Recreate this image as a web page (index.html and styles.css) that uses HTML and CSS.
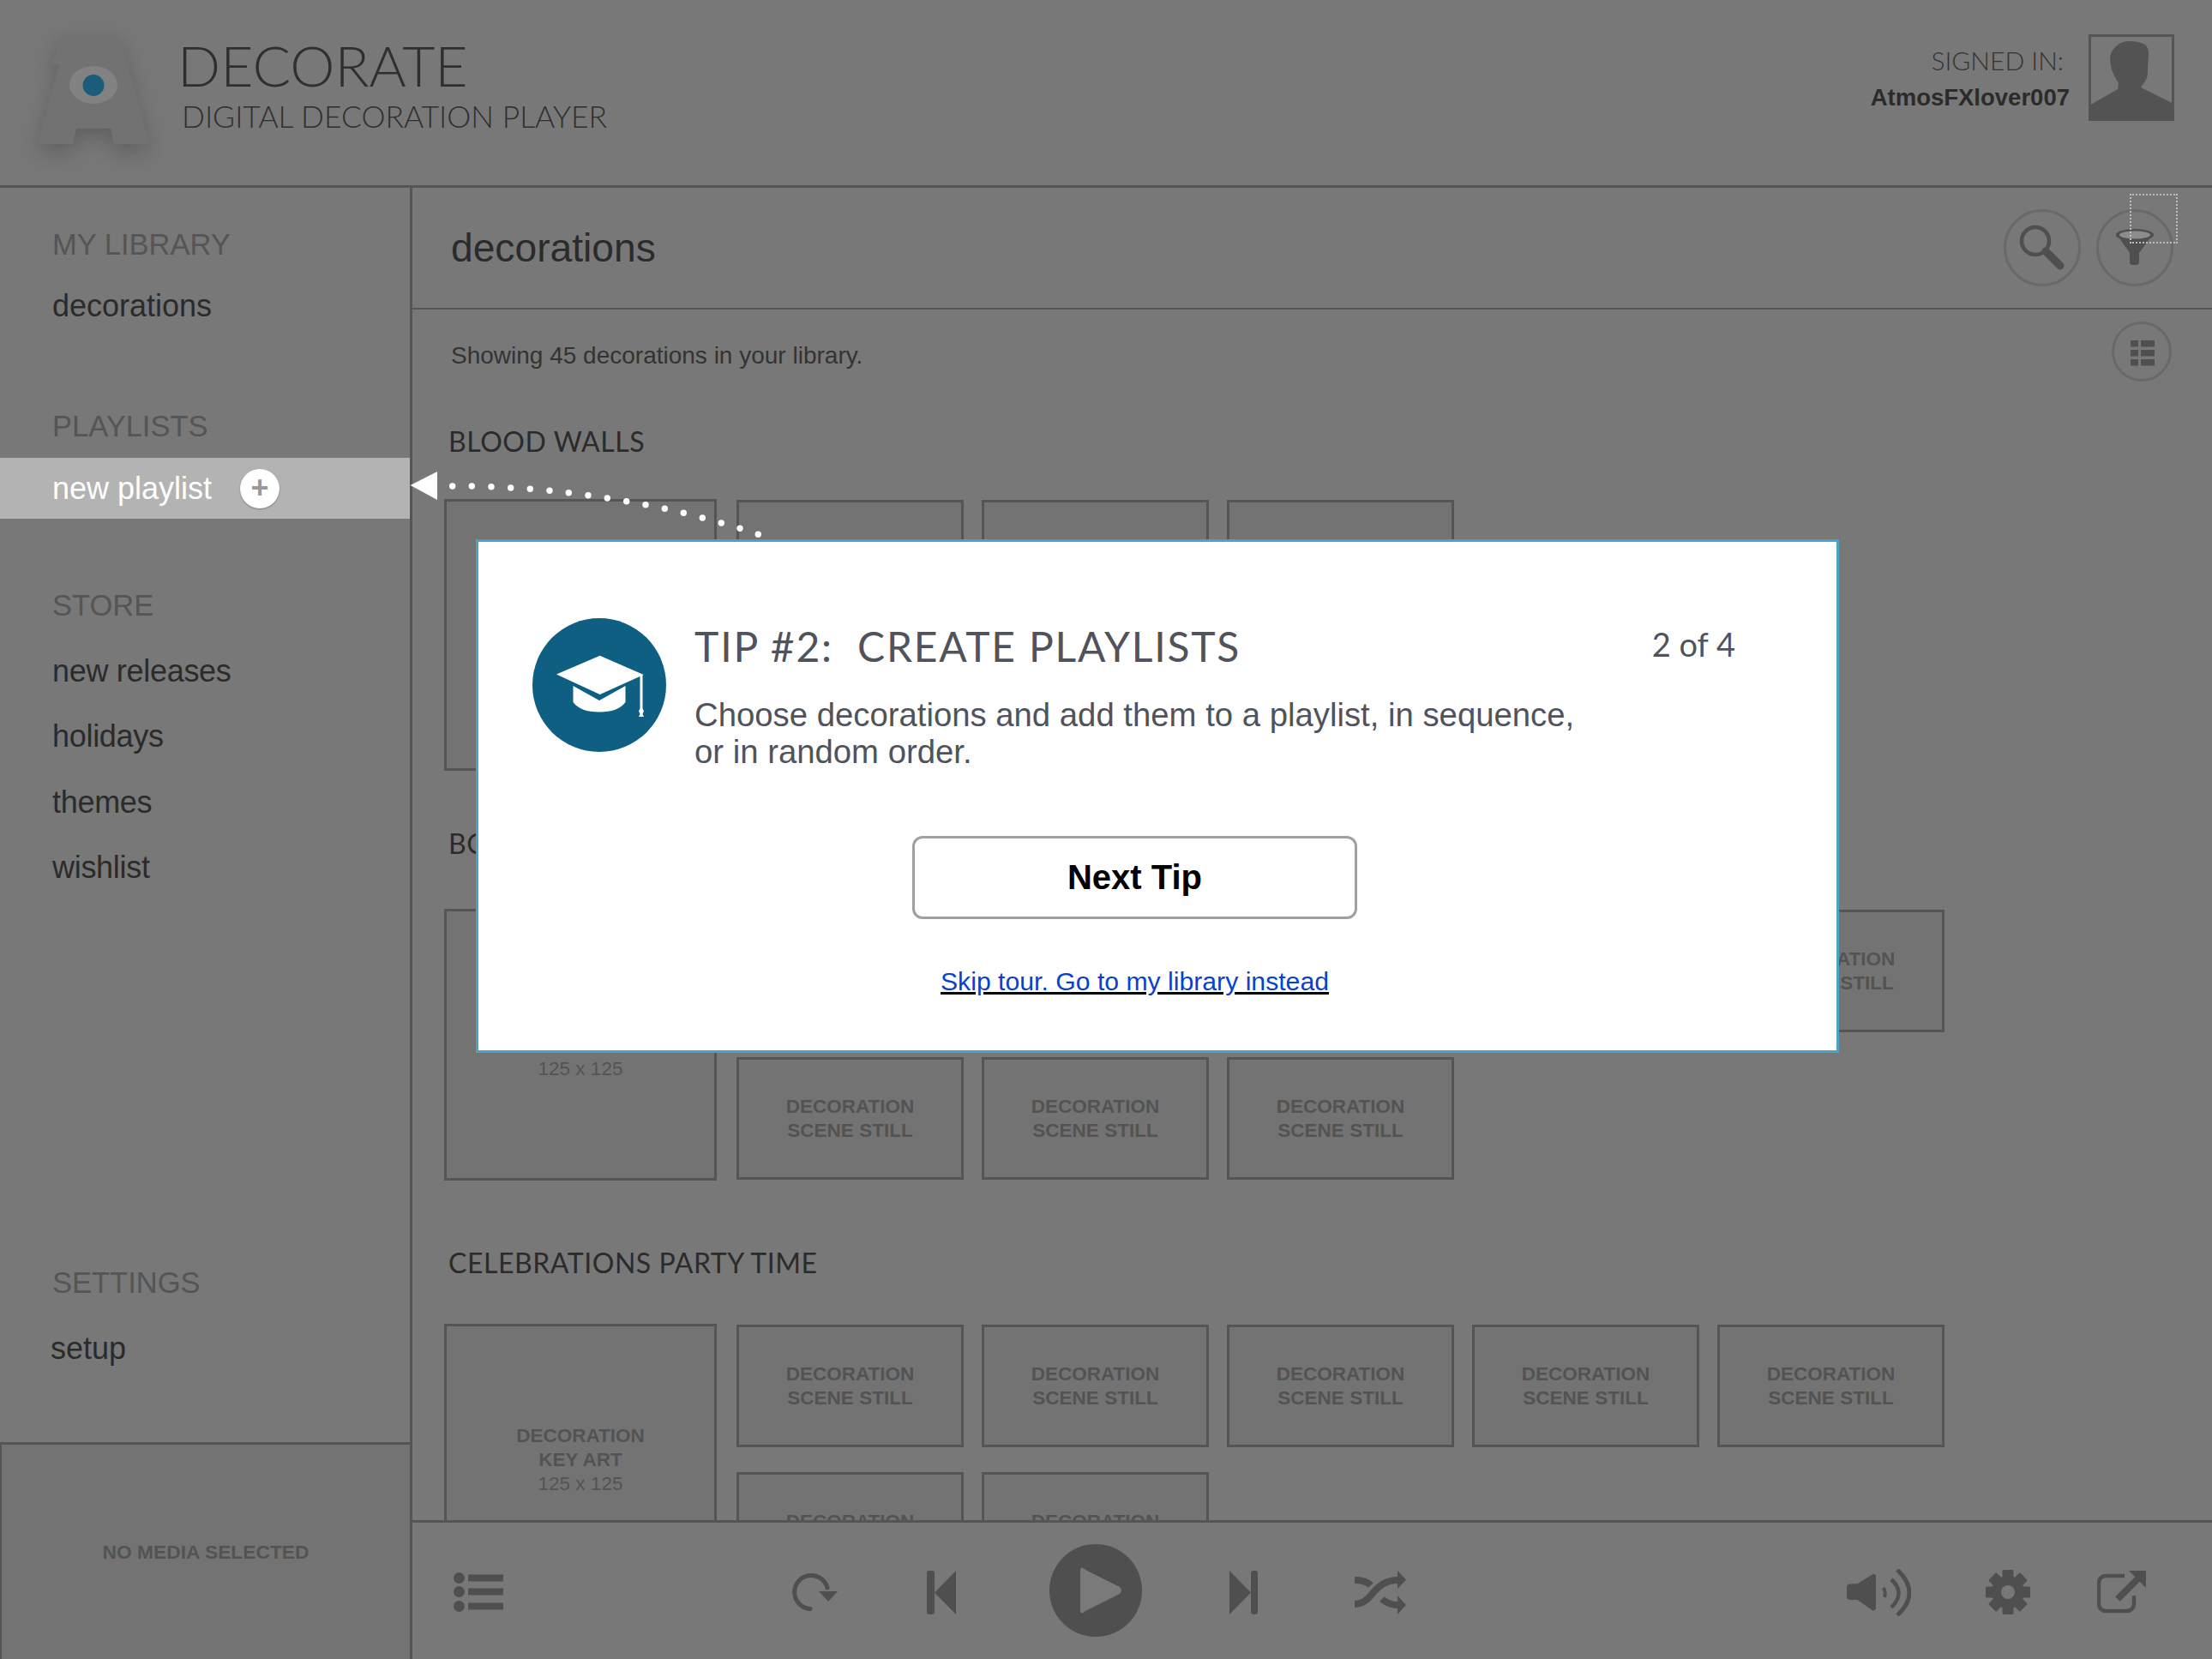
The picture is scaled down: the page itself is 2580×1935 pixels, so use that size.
FILE: index.html
```html
<!DOCTYPE html>
<html lang="en">
<head>
<meta charset="utf-8">
<title>Decorate</title>
<link rel="stylesheet" href="styles.css">
</head>
<body>
<div class="app">
  <header class="topbar">
    <div class="brand">
      <svg class="logo" viewBox="20 20 190 180" width="190" height="180">
        <polygon class="logo-a" points="69,41 139,41 175,168 133,168 129,150 89,150 85,168 44,168 69,75 60,75 66,61"/>
        <ellipse class="logo-eye" cx="109" cy="99" rx="28" ry="22"/>
        <circle class="logo-pupil" cx="109" cy="99.500" r="12.500"/>
      </svg>
      <div class="brand-text">
        <div class="brand-name">DECORATE</div>
        <div class="brand-sub">DIGITAL DECORATION PLAYER</div>
      </div>
    </div>
    <div class="account">
      <div class="account-text">
        <div class="signed">SIGNED IN:</div>
        <div class="username">AtmosFXlover007</div>
      </div>
      <svg class="avatar" viewBox="0 0 100 101" width="100" height="101">
        <rect class="avatar-frame" x="1.500" y="1.500" width="97" height="98"/>
        <path class="avatar-person" d="M1 83 L34 64 L35 57 Q27 44 26 37 L25 27 Q26 20 31 15 Q38 8 47 8 Q58 8 66 12 Q70 16 70 22 L69 42 Q69 50 67 53 L61 62 L97 80 L100 101 L0 101 Z"/>
      </svg>
    </div>
  </header>

  <div class="workspace">
    <aside class="sidebar">
      <nav class="nav-top">
        <section class="nav-group">
          <h2 class="nav-head">MY LIBRARY</h2>
          <a class="nav-item">decorations</a>
        </section>
        <section class="nav-group nav-group-playlists">
          <h2 class="nav-head">PLAYLISTS</h2>
          <a class="nav-active">new playlist<span class="plus">+</span></a>
        </section>
        <section class="nav-group nav-group-store">
          <h2 class="nav-head">STORE</h2>
          <a class="nav-item nav-item-store">new releases</a>
          <a class="nav-item nav-item-store">holidays</a>
          <a class="nav-item nav-item-store">themes</a>
          <a class="nav-item nav-item-store">wishlist</a>
        </section>
      </nav>
      <section class="nav-settings">
        <h2 class="nav-head">SETTINGS</h2>
        <a class="nav-item nav-item-setup">setup</a>
      </section>
      <div class="now-playing">NO MEDIA SELECTED</div>
    </aside>

    <main class="main">
      <div class="titlebar">
        <h1 class="page-title">decorations</h1>
        <div class="tools">
          <button class="round-btn">
            <svg viewBox="0 0 84 84" width="84" height="84">
              <circle class="ic-stroke" cx="34" cy="34" r="16" stroke-width="4.500"/>
              <line class="ic-stroke" x1="46" y1="46" x2="63" y2="63" stroke-width="9"/>
            </svg>
          </button>
          <button class="round-btn">
            <svg viewBox="0 0 84 84" width="84" height="84">
              <polygon class="ic-fill" points="20,25 64,25 47,48 47,60 45,62 38,62 36,60 36,48"/>
              <ellipse class="ic-fill" cx="42" cy="27" rx="22" ry="7"/>
              <ellipse class="filter-mouth" cx="42" cy="27" rx="18" ry="4.500"/>
            </svg>
          </button>
        </div>
        <div class="hotspot"></div>
      </div>

      <div class="content">
        <div class="summary">
          <p class="summary-text">Showing 45 decorations in your library.</p>
          <button class="round-btn round-btn-small">
            <svg viewBox="0 0 64 64" width="64" height="64">
              <rect class="ic-fill" x="19" y="19" width="9" height="7.500"/><rect class="ic-fill" x="31" y="19" width="16" height="7.500"/>
              <rect class="ic-fill" x="19" y="30" width="9" height="7.500"/><rect class="ic-fill" x="31" y="30" width="16" height="7.500"/>
              <rect class="ic-fill" x="19" y="41" width="9" height="7.500"/><rect class="ic-fill" x="31" y="41" width="16" height="7.500"/>
            </svg>
          </button>
        </div>

        <section class="shelf shelf-blood">
          <h3 class="shelf-title">BLOOD WALLS</h3>
          <div class="tiles">
            <div class="tile-key">DECORATION<br>KEY ART<br><span class="tile-size">125 x 125</span></div>
            <div class="stills">
              <div class="still">DECORATION<br>SCENE STILL</div>
              <div class="still">DECORATION<br>SCENE STILL</div>
              <div class="still">DECORATION<br>SCENE STILL</div>
            </div>
          </div>
        </section>

        <section class="shelf shelf-bones">
          <h3 class="shelf-title">BONE CHILLERS</h3>
          <div class="tiles">
            <div class="tile-key">DECORATION<br>KEY ART<br><span class="tile-size">125 x 125</span></div>
            <div class="stills">
              <div class="still">DECORATION<br>SCENE STILL</div>
              <div class="still">DECORATION<br>SCENE STILL</div>
              <div class="still">DECORATION<br>SCENE STILL</div>
              <div class="still">DECORATION<br>SCENE STILL</div>
              <div class="still">DECORATION<br>SCENE STILL</div>
              <div class="still">DECORATION<br>SCENE STILL</div>
              <div class="still">DECORATION<br>SCENE STILL</div>
              <div class="still">DECORATION<br>SCENE STILL</div>
            </div>
          </div>
        </section>

        <section class="shelf shelf-party">
          <h3 class="shelf-title">CELEBRATIONS PARTY TIME</h3>
          <div class="tiles">
            <div class="tile-key">DECORATION<br>KEY ART<br><span class="tile-size">125 x 125</span></div>
            <div class="stills">
              <div class="still">DECORATION<br>SCENE STILL</div>
              <div class="still">DECORATION<br>SCENE STILL</div>
              <div class="still">DECORATION<br>SCENE STILL</div>
              <div class="still">DECORATION<br>SCENE STILL</div>
              <div class="still">DECORATION<br>SCENE STILL</div>
              <div class="still">DECORATION<br>SCENE STILL</div>
              <div class="still">DECORATION<br>SCENE STILL</div>
            </div>
          </div>
        </section>
      </div>

      <footer class="player">
        <svg class="ic-list" viewBox="0 0 58 46" width="58" height="46">
          <circle class="ic-fill" cx="6.500" cy="6.500" r="6.500"/><rect class="ic-fill" x="17" y="2.500" width="41" height="8"/>
          <circle class="ic-fill" cx="6.500" cy="22.500" r="6.500"/><rect class="ic-fill" x="17" y="18.500" width="41" height="8"/>
          <circle class="ic-fill" cx="6.500" cy="39.500" r="6.500"/><rect class="ic-fill" x="17" y="35.500" width="41" height="8"/>
        </svg>
        <div class="transport">
          <svg class="ic-repeat" viewBox="0 0 53 44" width="53" height="44">
            <path class="ic-stroke" stroke-width="5" d="M21 41.500 A19.500 19.500 0 1 1 41 17"/>
            <polygon class="ic-fill" points="42,33 31,21 53,21"/>
          </svg>
          <svg class="ic-prev" viewBox="0 0 34 51" width="34" height="51">
            <rect class="ic-fill" x="0" y="0" width="9" height="51" rx="3"/>
            <polygon class="ic-fill" points="34,0 34,51 9,25.500"/>
          </svg>
          <svg class="ic-play" viewBox="0 0 108 108" width="108" height="108">
            <circle class="ic-fill" cx="54" cy="54" r="54"/>
            <path class="play-mark" d="M36 32 Q36 24 42 30 L82 50 Q86 54 82 58 L42 78 Q36 84 36 76 Z"/>
          </svg>
          <svg class="ic-next" viewBox="0 0 33 51" width="33" height="51">
            <polygon class="ic-fill" points="0,0 0,51 25,25.500"/>
            <rect class="ic-fill" x="25" y="0" width="8" height="51" rx="3"/>
          </svg>
          <svg class="ic-shuffle" viewBox="0 0 60 51" width="60" height="51">
            <path class="ic-stroke ic-butt" stroke-width="8" d="M0 39 C22 39 20 11 51 11"/>
            <path class="ic-stroke ic-butt" stroke-width="8" d="M0 11 C8 11 14 12 19 17"/>
            <path class="ic-stroke ic-butt" stroke-width="8" d="M32 33 C37 38 43 40 51 40"/>
            <polygon class="ic-fill" points="50,0 60,10.500 50,21"/>
            <polygon class="ic-fill" points="50,29 60,40 50,51"/>
          </svg>
        </div>
        <div class="extras">
          <svg class="ic-volume" viewBox="0 0 75 55" width="75" height="55">
            <path class="ic-fill" d="M4 17.500 L12.300 17.300 L31 5.700 L34 7.300 L34 46.700 L31 49 L12.300 36 L4 36 Q0 36 0 32 L0 21.500 Q0 17.500 4 17.500 Z"/>
            <path class="ic-stroke ic-butt" stroke-width="4" d="M42.500 22 Q46 26 44 33"/>
            <path class="ic-stroke ic-butt" stroke-width="4.500" d="M52 12 Q69 28 52 45"/>
            <path class="ic-stroke ic-butt" stroke-width="5" d="M59 1 Q87 28 59 54"/>
          </svg>
          <svg class="ic-gear" viewBox="-26 -26 52 52" width="52" height="52">
            <circle class="ic-stroke" r="13.500" stroke-width="11"/>
            <rect class="ic-fill" x="-6.500" y="-26" width="13" height="10" rx="1.500"/>
            <rect class="ic-fill" x="-6.500" y="-26" width="13" height="10" rx="1.500" transform="rotate(45)"/>
            <rect class="ic-fill" x="-6.500" y="-26" width="13" height="10" rx="1.500" transform="rotate(90)"/>
            <rect class="ic-fill" x="-6.500" y="-26" width="13" height="10" rx="1.500" transform="rotate(135)"/>
            <rect class="ic-fill" x="-6.500" y="-26" width="13" height="10" rx="1.500" transform="rotate(180)"/>
            <rect class="ic-fill" x="-6.500" y="-26" width="13" height="10" rx="1.500" transform="rotate(225)"/>
            <rect class="ic-fill" x="-6.500" y="-26" width="13" height="10" rx="1.500" transform="rotate(270)"/>
            <rect class="ic-fill" x="-6.500" y="-26" width="13" height="10" rx="1.500" transform="rotate(315)"/>
          </svg>
          <svg class="ic-share" viewBox="0 0 57 50" width="57" height="50">
            <path class="ic-stroke ic-butt" stroke-width="4.500" d="M32 6 H10 a8 8 0 0 0 -8 8 V39 a8 8 0 0 0 8 8 H35 a8 8 0 0 0 8 -8 V29"/>
            <line class="ic-stroke ic-butt" x1="24" y1="33" x2="49" y2="8" stroke-width="8"/>
            <polygon class="ic-fill" points="37,0 57,0 57,20"/>
          </svg>
        </div>
      </footer>
    </main>
  </div>

  <svg class="pointer" viewBox="478 545 420 90" width="420" height="90">
    <polygon class="pointer-dot" points="510,550 510,583 478.600,566"/>
    <circle class="pointer-dot" cx="527.700" cy="567" r="3.700"/>
    <circle class="pointer-dot" cx="550.300" cy="567" r="3.700"/>
    <circle class="pointer-dot" cx="573" cy="567.700" r="3.700"/>
    <circle class="pointer-dot" cx="595.700" cy="569" r="3.700"/>
    <circle class="pointer-dot" cx="618.300" cy="570.300" r="3.700"/>
    <circle class="pointer-dot" cx="641" cy="572.300" r="3.700"/>
    <circle class="pointer-dot" cx="663.300" cy="574.700" r="3.700"/>
    <circle class="pointer-dot" cx="686" cy="577.700" r="3.700"/>
    <circle class="pointer-dot" cx="708.300" cy="581" r="3.700"/>
    <circle class="pointer-dot" cx="730.700" cy="584.700" r="3.700"/>
    <circle class="pointer-dot" cx="753" cy="588.700" r="3.700"/>
    <circle class="pointer-dot" cx="775.300" cy="593.300" r="3.700"/>
    <circle class="pointer-dot" cx="797.300" cy="598.300" r="3.700"/>
    <circle class="pointer-dot" cx="819.300" cy="604" r="3.700"/>
    <circle class="pointer-dot" cx="841.300" cy="610" r="3.700"/>
    <circle class="pointer-dot" cx="863" cy="616.300" r="3.700"/>
    <circle class="pointer-dot" cx="884.300" cy="623.300" r="3.700"/>
  </svg>

  <div class="modal">
    <div class="tip">
      <svg class="tip-icon" viewBox="0 0 156 156" width="156" height="156">
        <circle class="tip-disc" cx="78" cy="78" r="78"/>
        <path class="tip-cap" d="M47.500 79 L78 96 L108.500 79 L108.500 98 Q100 109.500 78 109.500 Q56 109.500 47.500 98 Z"/>
        <polygon class="tip-cap" points="28,65.500 78.700,43.700 129.700,66 78.700,89"/>
        <rect class="tip-cap" x="125.500" y="66" width="3" height="42"/>
        <polygon class="tip-cap" points="127,104 130,108 128.500,112 130,115 124,115 125.500,112 124,108"/>
      </svg>
      <div class="tip-body">
        <div class="tip-head">
          <h2 class="tip-title">TIP #2:  CREATE PLAYLISTS</h2>
          <span class="tip-count">2 of 4</span>
        </div>
        <p class="tip-text">Choose decorations and add them to a playlist, in sequence,<br>or in random order.</p>
      </div>
    </div>
    <div class="tip-actions">
      <button class="next-btn">Next Tip</button>
      <a class="skip-link" href="#">Skip tour. Go to my library instead</a>
    </div>
  </div>
</div>
</body>
</html>
```

FILE: styles.css
```css
* { box-sizing: border-box; }
html, body { margin: 0; padding: 0; }
body { background: #787878; font-family: "Liberation Sans", Arial, sans-serif; color: #2b2b2b; }
h1, h2, h3, p { margin: 0; font-weight: normal; }

.app { position: relative; width: 2580px; height: 1935px; overflow: hidden; display: flex; flex-direction: column; }

/* top bar */
.topbar { height: 219px; flex: none; border-bottom: 3px solid #555; display: flex; justify-content: space-between; align-items: flex-start; padding-right: 43px; }
.brand { display: flex; align-items: flex-start; margin-left: 20px; margin-top: 20px; }
.logo { display: block; overflow: visible; }
.logo-a { fill: #727272; filter: drop-shadow(0 9px 12px rgba(60,60,60,.4)); }
.logo-eye { fill: #828282; }
.logo-pupil { fill: #1b5c78; }
.brand-text { margin-left: -3px; margin-top: 21px; font-family: Lato, sans-serif; font-weight: 300; color: #2f2f2f; }
.brand-name { font-size: 66px; line-height: 70px; height: 70px; }
.brand-sub { font-size: 35.400px; line-height: 44px; margin-top: 3px; margin-left: 5px; }
.account { display: flex; align-items: flex-start; margin-top: 40px; }
.account-text { text-align: right; margin-top: 8px; margin-right: 22px; }
.signed { font-family: Lato, sans-serif; font-weight: 300; font-size: 30px; line-height: 44px; margin-right: 7px; color: #333; }
.username { font-weight: bold; font-size: 27.500px; line-height: 44px; color: #2b2b2b; }
.avatar { display: block; margin-right: 1px; }
.avatar-frame { fill: none; stroke: #555; stroke-width: 3; }
.avatar-person { fill: #535353; }

/* layout */
.workspace { flex: 1; display: flex; min-height: 0; }

/* sidebar */
.sidebar { width: 481px; flex: none; border-right: 3px solid #555; display: flex; flex-direction: column; }
.nav-top { padding-top: 46px; flex: 1; }
.nav-head { font-size: 34.500px; line-height: 40px; height: 40px; padding-left: 61px; color: #555; }
.nav-item { display: block; font-size: 36px; line-height: 40px; height: 40px; margin-top: 32px; padding-left: 61px; color: #2b2b2b; }
.nav-item-store { margin-top: 36.600px; letter-spacing: -.3px; }
.nav-group-playlists { margin-top: 100px; }
.nav-group-store { margin-top: 81px; }
.nav-active { display: flex; align-items: center; height: 71px; margin-top: 17px; padding-left: 61px; background: #b3b3b3; color: #fff; font-size: 36px; }
.plus { width: 46px; height: 46px; margin-left: 33px; border-radius: 50%; background: #fff; color: #999; font-size: 36px; font-weight: bold; line-height: 44px; text-align: center; box-shadow: 0 1px 2px rgba(0,0,0,.3); }
.nav-settings { padding-bottom: 89px; }
.nav-item-setup { margin-top: 37px; padding-left: 59px; }
.now-playing { height: 253px; flex: none; background: #737373; border-top: 3px solid #555; border-left: 2px solid #555; display: flex; align-items: center; justify-content: center; padding-top: 1px; font-size: 22.800px; font-weight: bold; color: #535353; }

/* main */
.main { flex: 1; min-width: 0; display: flex; flex-direction: column; }
.titlebar { position: relative; height: 142px; flex: none; border-bottom: 2px solid #555; display: flex; align-items: center; justify-content: space-between; padding: 0 45px; }
.page-title { font-size: 46.200px; line-height: 60px; color: #2b2b2b; }
.tools { display: flex; gap: 18px; }
.round-btn { width: 90px; height: 90px; padding: 0; border: 3px solid #696969; border-radius: 50%; background: none; display: flex; align-items: center; justify-content: center; }
.round-btn svg { display: block; }
.round-btn-small { width: 70px; height: 70px; }
.hotspot { position: absolute; left: 2003px; top: 7px; width: 56px; height: 58px; border: 2px dotted #bdbdbd; }
.ic-fill { fill: #4f4f4f; }
.ic-stroke { fill: none; stroke: #4f4f4f; stroke-linecap: round; }
.ic-butt { stroke-linecap: butt; }
.filter-mouth { fill: #8c8c8c; }
.play-mark { fill: #7a7a7a; }

.content { flex: 1; min-height: 0; overflow: hidden; padding: 14px 0 0 37px; }
.summary { display: flex; justify-content: space-between; align-items: flex-start; padding-right: 47px; height: 70px; }
.summary-text { font-size: 28px; line-height: 40px; margin: 20px 0 0 8px; color: #333; }
.shelf-title { font-family: Lato, sans-serif; font-size: 32px; line-height: 40px; letter-spacing: .55px; margin-left: 5px; color: #2b2b2b; }
.shelf-blood { margin-top: 50px; }
.shelf-blood .tiles { margin-top: 47px; }
.shelf-bones { margin-top: 65px; }
.shelf-bones .tiles { margin-top: 56px; }
.shelf-party { margin-top: 76px; }
.shelf-party .tiles { margin-top: 51px; }
.tiles { display: flex; align-items: flex-start; }
.tile-key { width: 318px; height: 317px; flex: none; margin-right: 23px; border: 3px solid #555; background: #737373; text-align: center; padding-top: 114px; font-size: 22.500px; line-height: 28px; font-weight: bold; color: #535353; }
.tile-size { font-weight: normal; }
.stills { width: 1409px; padding-top: 1px; display: flex; flex-wrap: wrap; gap: 29px 21px; }
.still { width: 265px; height: 143px; border: 3px solid #555; background: #737373; padding-top: 41px; text-align: center; font-size: 22.500px; line-height: 28px; font-weight: bold; color: #535353; }

/* footer */
.player { height: 162px; flex: none; border-top: 3px solid #555; display: flex; align-items: center; padding: 3px 77px 0 48px; }
.player svg { display: block; flex: none; }
.transport { display: flex; align-items: center; margin-left: 337px; }
.ic-prev { margin-left: 104px; }
.ic-play { margin-left: 109px; margin-bottom: 4px; }
.ic-next { margin-left: 102px; }
.ic-shuffle { margin-left: 113px; }
.extras { display: flex; align-items: center; margin-left: auto; }
.ic-gear { margin-left: 87px; }
.ic-share { margin-left: 78px; }

/* tour overlay */
.pointer { position: absolute; left: 478px; top: 545px; }
.pointer-dot { fill: #fff; }
.modal { position: absolute; left: 555px; top: 629px; width: 1590px; height: 599px; background: #fff; border: 3px solid #4aa3c4; padding: 89px 0 0 63px; color: #50535c; }
.tip { display: flex; align-items: flex-start; }
.tip-icon { display: block; flex: none; }
.tip-disc { fill: #0f5f83; }
.tip-cap { fill: #fff; }
.tip-body { margin-left: 33px; width: 1214px; padding-top: 3px; }
.tip-head { display: flex; justify-content: space-between; align-items: center; height: 60px; }
.tip-title { font-family: Lato, sans-serif; font-size: 48px; line-height: 60px; letter-spacing: 1.800px; white-space: pre; }
.tip-count { font-family: Lato, sans-serif; font-size: 38px; margin-bottom: 6px; }
.tip-text { font-size: 38.300px; line-height: 43px; margin-top: 28px; }
.tip-actions { display: flex; flex-direction: column; align-items: center; margin-left: -63px; padding-right: 53px; margin-top: 77px; }
.next-btn { width: 519px; height: 97px; background: #fff; border: 3px solid #a0a0a0; border-radius: 12px; font-family: "Liberation Sans", Arial, sans-serif; font-size: 40px; font-weight: bold; color: #000; padding: 0; }
.skip-link { margin-top: 55px; font-size: 30.200px; line-height: 36px; color: #0a3fd0; text-decoration: underline; text-decoration-color: #000; }
```
